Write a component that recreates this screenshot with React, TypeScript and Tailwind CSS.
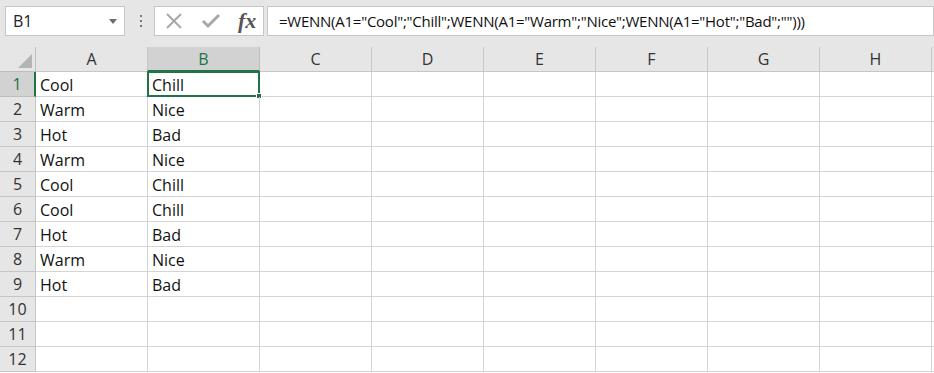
import React from 'react';

const cols = ['A', 'B', 'C', 'D', 'E', 'F', 'G', 'H'];

const data: [string, string][] = [
    ['Cool', 'Chill'],
    ['Warm', 'Nice'],
    ['Hot', 'Bad'],
    ['Warm', 'Nice'],
    ['Cool', 'Chill'],
    ['Cool', 'Chill'],
    ['Hot', 'Bad'],
    ['Warm', 'Nice'],
    ['Hot', 'Bad'],
    ['', ''],
    ['', ''],
    ['', ''],
];

const font = { fontFamily: '"Open Sans", "Liberation Sans", sans-serif' };

function FormulaBar() {
    return (
        <div className="flex items-center h-[47px] pt-[6px] pb-[11px] pl-[5px] bg-[#e6e6e6]">
            {/* Name box */}
            <div className="flex items-center justify-between w-[120px] h-[30px] bg-white border border-[#c6c6c6] pl-[7px] pr-[7px]">
                <span className="text-[16px] text-[#222]">B1</span>
                <svg width="8" height="5" viewBox="0 0 8 5">
                    <path d="M0 0 L8 0 L4 5 Z" fill="#6b6b6b" />
                </svg>
            </div>
            {/* Separator dots */}
            <div className="flex flex-col gap-[3px] ml-[15px] mr-[12px]">
                <span className="w-[2px] h-[2px] bg-[#777]" />
                <span className="w-[2px] h-[2px] bg-[#777]" />
                <span className="w-[2px] h-[2px] bg-[#777]" />
            </div>
            {/* Cancel / enter / fx */}
            <div className="flex items-center w-[110px] h-[30px] bg-white border border-[#c6c6c6]">
                <svg width="18" height="18" viewBox="0 0 18 18" className="ml-[10px]">
                    <path d="M2 2 L16 16 M16 2 L2 16" stroke="#a8a8a8" strokeWidth="2" />
                </svg>
                <svg width="20" height="18" viewBox="0 0 20 18" className="ml-[18px]">
                    <path d="M2 9 L7 14 L18 3" stroke="#a8a8a8" strokeWidth="3" fill="none" />
                </svg>
                <span
                    className="ml-[17px] text-[22px] italic font-bold text-[#555] leading-none"
                    style={{ fontFamily: '"Liberation Serif", serif' }}
                >
                    fx
                </span>
            </div>
            {/* Formula input */}
            <div className="flex-1 flex items-center h-[30px] ml-[3px] bg-white border border-[#c6c6c6] pl-[11px]">
                <span className="text-[15px] tracking-[-0.25px] text-[#111] whitespace-nowrap">
                    =WENN(A1="Cool";"Chill";WENN(A1="Warm";"Nice";WENN(A1="Hot";"Bad";"")))
                </span>
            </div>
        </div>
    );
}

function Grid() {
    return (
        <div className="grid grid-cols-[36px_repeat(8,112px)_1fr] bg-white">
            {/* Corner */}
            <div className="relative h-[25px] bg-[#e6e6e6] border-r border-b border-[#bdbdbd]">
                <svg width="14" height="14" viewBox="0 0 14 14" className="absolute right-[3px] bottom-[3px]">
                    <path d="M14 0 L14 14 L0 14 Z" fill="#b4b4b4" />
                </svg>
            </div>
            {cols.map((c) => (
                <div
                    key={c}
                    className={`flex items-center justify-center h-[25px] text-[16px] border-r border-b ${c === 'B'
                        ? 'bg-[#d2d2d2] text-[#217346] border-r-[#bdbdbd] border-b-2 border-b-[#217346]'
                        : 'bg-[#e6e6e6] text-[#333] border-[#c6c6c6]'
                        }`}
                >
                    {c}
                </div>
            ))}
            <div className="h-[25px] bg-[#e6e6e6] border-b border-[#c6c6c6]" />

            {data.map(([a, b], i) => (
                <React.Fragment key={i}>
                    <div
                        className={`flex items-center justify-center h-[25px] text-[16px] border-b ${i === 0
                            ? 'bg-[#d2d2d2] text-[#217346] border-r-2 border-r-[#217346] border-b-[#bdbdbd]'
                            : 'bg-[#e6e6e6] text-[#333] border-r border-[#c6c6c6]'
                            }`}
                    >
                        {i + 1}
                    </div>
                    <div className="flex items-center h-[25px] pl-[4px] pt-[1px] text-[16px] text-[#111] border-r border-b border-[#d4d4d4]">
                        {a}
                    </div>
                    <div className="relative flex items-center h-[25px] pl-[4px] pt-[1px] text-[16px] text-[#111] border-r border-b border-[#d4d4d4]">
                        {b}
                        {i === 0 && (
                            <>
                                <div className="absolute -left-[1px] -top-[1px] -right-[1px] -bottom-[1px] border-2 border-[#217346]" />
                                <div className="absolute -right-[3px] -bottom-[3px] w-[6px] h-[6px] bg-[#217346] border border-white" />
                            </>
                        )}
                    </div>
                    {cols.slice(2).map((c) => (
                        <div key={c} className="h-[25px] border-r border-b border-[#d4d4d4]" />
                    ))}
                    <div className="h-[25px] border-b border-[#d4d4d4]" />
                </React.Fragment>
            ))}
        </div>
    );
}

export default function App() {
    return (
        <div className="w-[934px] h-[373px] overflow-hidden bg-white" style={font}>
            <FormulaBar />
            <Grid />
        </div>
    );
}
